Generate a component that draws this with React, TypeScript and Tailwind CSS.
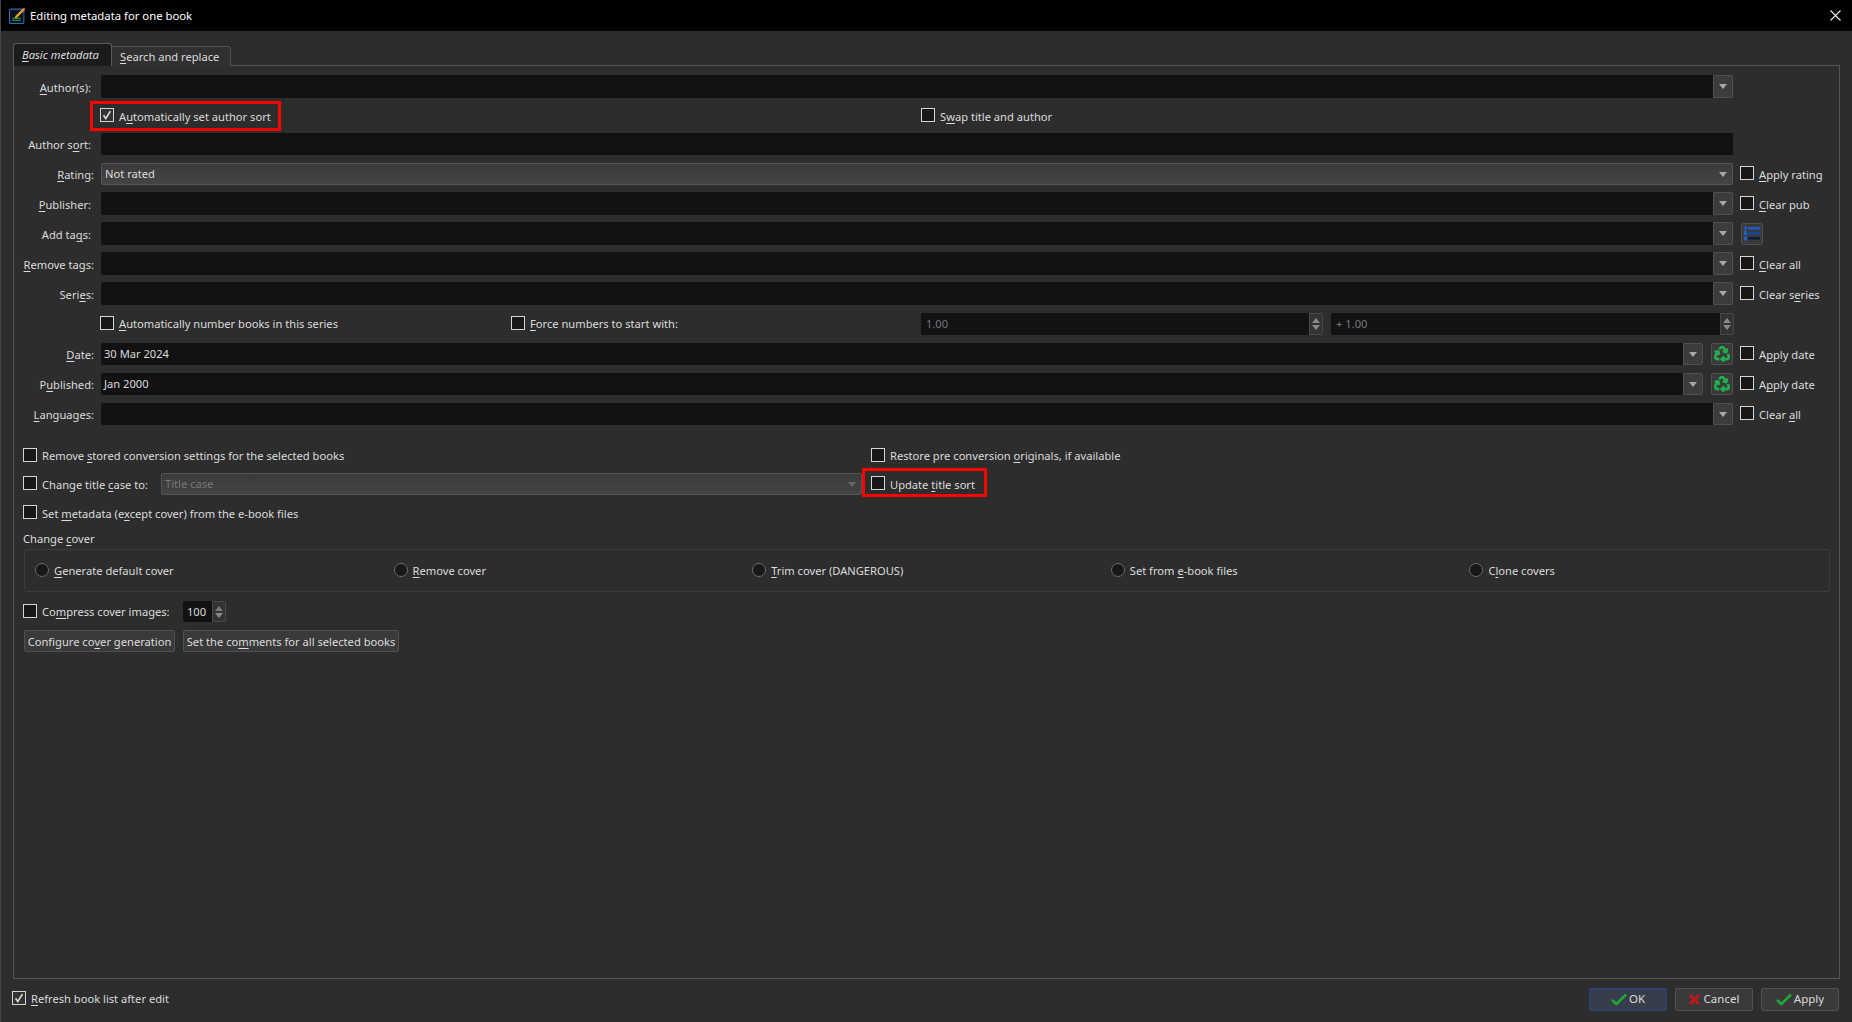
import React from "react";
import { FaRecycle } from "react-icons/fa";

const U = ({ children }: { children: React.ReactNode }) => <u className="underline-offset-2 decoration-1">{children}</u>;

const Tick = ({ size = 14 }: { size?: number }) => (
  <svg width={size} height={size} viewBox="0 0 14 14"><path d="M3 7.2 L5.6 11 L11 2.5" fill="none" stroke="#d8d8d8" strokeWidth="2" /></svg>
);

const Box = ({ on }: { on?: boolean }) => (
  <span className={`w-[14px] h-[14px] shrink-0 -translate-y-[1px] border border-[#d4d4d4] flex items-center justify-center ${on ? "bg-[#333333]" : "bg-[#181818]"}`}>
    {on && <Tick size={12} />}
  </span>
);

const Check = ({ on, flat, children, className = "" }: { on?: boolean; flat?: boolean; children: React.ReactNode; className?: string }) => (
  <span className={`flex items-center gap-[5px] whitespace-nowrap ${className}`}>
    <Box on={on} />
    <span className={flat ? "" : "translate-y-[1px]"}>{children}</span>
  </span>
);

const Arrow = ({ c = "#a8a8a8" }: { c?: string }) => (
  <svg width="8" height="5" viewBox="0 0 8 5"><path d="M0 0 H8 L4 5 Z" fill={c} /></svg>
);

const DropBtn = () => (
  <span className="w-[20px] h-full shrink-0 bg-[#3c3c3c] border border-[#505050] rounded-r-[2px] flex items-center justify-center"><Arrow /></span>
);

const Field = ({ text, drop = true }: { text?: string; drop?: boolean }) => (
  <span className="flex-1 h-full flex min-w-0">
    <span className="flex-1 h-full bg-[#121212] rounded-l-[2px] px-[3px] flex items-center text-[#dcdcdc]">{text}</span>
    {drop && <DropBtn />}
  </span>
);

const Label = ({ children, far }: { children: React.ReactNode; far?: boolean }) => (
  <span className={`w-[87px] shrink-0 text-right whitespace-nowrap pt-[2px] ${far ? "pr-[7px]" : "pr-[10px]"}`}>{children}</span>
);

const Combo = ({ text, dim, className = "" }: { text: string; dim?: boolean; className?: string }) => (
  <span className={`h-full flex items-center justify-between bg-gradient-to-b from-[#3a3a3a] to-[#444444] border border-[#555555] rounded-[2px] pl-[3px] pr-[5px] ${dim ? "text-[#777777]" : "text-[#dcdcdc]"} ${className}`}>
    <span>{text}</span>
    <Arrow c={dim ? "#666666" : "#a8a8a8"} />
  </span>
);

const Spin = ({ text, className = "" }: { text: string; className?: string }) => (
  <span className={`h-full flex ${className}`}>
    <span className="flex-1 bg-[#121212] rounded-l-[2px] flex items-center pl-[5px] text-[#777777]">{text}</span>
    <span className="w-[14px] bg-[#333333] border border-[#484848] rounded-r-[2px] flex flex-col items-center justify-center gap-[2px]">
      <svg width="8" height="5" viewBox="0 0 8 5"><path d="M0 5 H8 L4 0 Z" fill="#8a8a8a" /></svg>
      <Arrow c="#8a8a8a" />
    </span>
  </span>
);

const RecycleBtn = () => (
  <span className="w-[22px] h-full shrink-0 ml-[8px] bg-[#3a3a3a] border border-[#505050] rounded-[2px] flex items-center justify-center">
    <FaRecycle className="text-[#22b14c] text-[16px] stroke-[#22b14c] stroke-[28]" />
  </span>
);

const ListIcon = () => (
  <svg width="16" height="15" viewBox="0 0 16 15">
    <rect x="0.5" y="0" width="2" height="4" fill="#1f5fd0" />
    <rect x="0" y="5" width="3" height="4" fill="#1f5fd0" />
    <rect x="0" y="10.5" width="3" height="4" fill="#1f5fd0" />
    <rect x="4" y="1" width="12" height="2.5" fill="#1a5cc8" />
    <rect x="4" y="6" width="12" height="2.5" fill="#16479c" />
    <rect x="4" y="11" width="12" height="2.5" fill="#0f1c33" />
  </svg>
);

const TitleIcon = () => (
  <svg width="17" height="17" viewBox="0 0 16 16">
    <rect x="0.5" y="2" width="13.5" height="13.5" rx="1" fill="#0c1018" stroke="#2a6db8" />
    <path d="M3 10.5h8M3 12.5h8" stroke="#2f9e44" strokeWidth="1" />
    <path d="M6 8.5 L13.5 1 L15 2.5 L7.5 10 L5.5 10.5 Z" fill="#e8a030" />
    <path d="M13 1.5 L14.5 3 L15.6 1.9 L14.1 0.4 Z" fill="#d84a2a" />
  </svg>
);

const Row = ({ className, children }: { className: string; children: React.ReactNode }) => (
  <div className={`flex items-center ${className}`}>{children}</div>
);

const Side = ({ children }: { children: React.ReactNode }) => (
  <Check className="ml-[7px]">{children}</Check>
);

const Main = ({ children }: { children: React.ReactNode }) => (
  <span className="w-[1632px] shrink-0 h-full flex">{children}</span>
);

const Radio = ({ children }: { children: React.ReactNode }) => (
  <span className="flex items-center gap-[5px] whitespace-nowrap pt-[1px]">
    <span className="w-[14px] h-[14px] -ml-[1px] -translate-y-[1px] rounded-full bg-[#181818] border border-[#6a6a6a] shrink-0" />
    <span>{children}</span>
  </span>
);

const Btn = ({ children, className = "" }: { children: React.ReactNode; className?: string }) => (
  <span className={`h-full flex items-center justify-center bg-[#3a3a3a] border border-[#505050] rounded-[2px] whitespace-nowrap ${className}`}>{children}</span>
);

const Ok = () => (
  <svg width="16" height="13" viewBox="0 0 16 13"><path d="M1 7 L5.5 11 L15 1.5" fill="none" stroke="#22a838" strokeWidth="2.6" /></svg>
);

export default function App() {
  return (
    <div
      className="relative w-[1852px] h-[1022px] overflow-hidden flex flex-col bg-[#2d2d2d] text-[#dcdcdc] text-[11.15px] leading-none border-l border-[#444444]"
      style={{ fontFamily: '"Noto Sans", sans-serif' }}
    >
      <div className="h-[31px] shrink-0 bg-black flex items-center pl-[8px] pr-[11px] text-white text-[11.3px]">
        <TitleIcon />
        <span className="ml-[4px] flex-1">Editing metadata for one book</span>
        <svg width="11" height="11" viewBox="0 0 11 11"><path d="M0.5 0.5 L10.5 10.5 M10.5 0.5 L0.5 10.5" stroke="#f0f0f0" strokeWidth="1.1" /></svg>
      </div>

      <div className="flex-1 min-h-0 pl-[12px] pr-[12px] pt-[11px] flex flex-col">
        <div className="flex items-end h-[23px] shrink-0 relative top-[1px]">
          <span className="h-[23px] w-[99px] flex items-center pl-[8px] italic bg-[#1b1b1b] border border-b-0 border-[#5a5a5a] rounded-t-[3px]"><span><U>B</U>asic metadata</span></span>
          <span className="h-[20px] w-[119px] flex items-center pl-[8px] bg-[#303030] border border-l-0 border-b-0 border-[#4e4e4e] rounded-tr-[3px]"><span><U>S</U>earch and replace</span></span>
        </div>

        <div className="flex-1 min-h-0 border border-[#555555] pt-[9px]">
          <Row className="h-[23px]"><Label><U>A</U>uthor(s):</Label><Main><Field /></Main></Row>
          <Row className="mt-[6px] h-[23px] pt-[1px]">
            <span className="w-[86px] shrink-0" />
            <Check on className="w-[821px]"><>A<U>u</U>tomatically set author sort</></Check>
            <Check>S<U>w</U>ap title and author</Check>
          </Row>
          <Row className="mt-[6px] h-[22px]"><Label>Author s<U>o</U>rt:</Label><Main><Field drop={false} /></Main></Row>
          <Row className="mt-[8px] h-[22px]"><Label far><U>R</U>ating:</Label><Main><Combo text="Not rated" className="w-full" /></Main><Side><U>A</U>pply rating</Side></Row>
          <Row className="mt-[7px] h-[23px]"><Label><U>P</U>ublisher:</Label><Main><Field /></Main><Side><U>C</U>lear pub</Side></Row>
          <Row className="mt-[7px] h-[23px]">
            <Label>Add ta<U>g</U>s:</Label><Main><Field /></Main>
            <span className="ml-[8px] w-[22px] h-[22px] bg-[#3a3a3a] border border-[#505050] rounded-[3px] flex items-center justify-center"><ListIcon /></span>
          </Row>
          <Row className="mt-[7px] h-[23px]"><Label far><U>R</U>emove tags:</Label><Main><Field /></Main><Side><U>C</U>lear all</Side></Row>
          <Row className="mt-[7px] h-[23px]"><Label far>Seri<U>e</U>s:</Label><Main><Field /></Main><Side>Clear s<U>e</U>ries</Side></Row>
          <Row className="mt-[8px] h-[22px]">
            <span className="w-[86px] shrink-0" />
            <Check flat className="w-[411px]"><><U>A</U>utomatically number books in this series</></Check>
            <Check flat className="w-[410px]"><><U>F</U>orce numbers to start with:</></Check>
            <Spin text="1.00" className="w-[402px]" />
            <Spin text="+ 1.00" className="w-[403px] ml-[8px]" />
          </Row>
          <Row className="mt-[8px] h-[22px]"><Label far><U>D</U>ate:</Label><Main><Field text="30 Mar 2024" /><RecycleBtn /></Main><Side>A<U>p</U>ply date</Side></Row>
          <Row className="mt-[8px] h-[22px]"><Label far>P<U>u</U>blished:</Label><Main><Field text="Jan 2000" /><RecycleBtn /></Main><Side>A<U>p</U>ply date</Side></Row>
          <Row className="mt-[8px] h-[22px]"><Label far><U>L</U>anguages:</Label><Main><Field /></Main><Side>Clear <U>a</U>ll</Side></Row>

          <div className="pl-[9px] pr-[9px]">
            <Row className="mt-[20px] h-[22px]">
              <Check flat className="w-[848px]"><>Remove <U>s</U>tored conversion settings for the selected books</></Check>
              <Check flat>Restore pre conversion <U>o</U>riginals, if available</Check>
            </Row>
            <Row className="mt-[6px] h-[22px]">
              <Check className="w-[138px]"><>Change title <U>c</U>ase to:</></Check>
              <Combo text="Title case" dim className="w-[701px]" />
              <Check className="ml-[9px]">Update <U>t</U>itle sort</Check>
            </Row>
            <Row className="mt-[7px] h-[22px]">
              <Check>Set <U>m</U>etadata (e<U>x</U>cept cover) from the e-book files</Check>
            </Row>
            <div className="mt-[6px] h-[18px] flex items-center"><span>Change <U>c</U>over</span></div>
            <div className="mt-[1px] h-[43px] ml-[1px] border border-[#3c3c3c] rounded-[2px] pl-[11px] grid grid-cols-5 items-center">
              <Radio><U>G</U>enerate default cover</Radio>
              <Radio><U>R</U>emove cover</Radio>
              <Radio><U>T</U>rim cover (DANGEROUS)</Radio>
              <Radio>Set from <U>e</U>-book files</Radio>
              <Radio>C<U>l</U>one covers</Radio>
            </div>
            <Row className="mt-[9px] h-[21px]">
              <Check flat className="w-[160px]"><>Co<U>m</U>press cover images:</></Check>
              <span className="h-full w-[43px] flex">
                <span className="flex-1 bg-[#121212] rounded-l-[2px] flex items-center pl-[4px] text-[#dcdcdc]">100</span>
                <span className="w-[14px] bg-[#333333] border border-[#484848] rounded-r-[2px] flex flex-col items-center justify-center gap-[2px]">
                  <svg width="8" height="5" viewBox="0 0 8 5"><path d="M0 5 H8 L4 0 Z" fill="#777777" /></svg>
                  <Arrow c="#8a8a8a" />
                </span>
              </span>
            </Row>
            <Row className="mt-[8px] h-[22px] pl-[1px] gap-[8px]">
              <Btn className="w-[151px] pt-[1px]">Configure co<U>v</U>er generation</Btn>
              <Btn className="w-[216px] pt-[1px]">Set the co<U>m</U>ments for all selected books</Btn>
            </Row>
          </div>
        </div>

        <div className="h-[43px] shrink-0 flex items-center">
          <Check flat on className="flex-1 -ml-[1px] mb-[3px]"><><U>R</U>efresh book list after edit</></Check>
          <div className="flex h-[23px] gap-[8px] -ml-[1px] mr-[1px] mb-[3px]">
            <Btn className="w-[78px] gap-[2px] !bg-[#373d4a] !border-[#1c4a8c] text-[11.5px]"><Ok />OK</Btn>
            <Btn className="w-[78px] gap-[4px] text-[11.5px]">
              <svg width="11" height="11" viewBox="0 0 11 11"><path d="M1 1 L10 10 M10 1 L1 10" stroke="#c01818" strokeWidth="3" /></svg>
              Cancel
            </Btn>
            <Btn className="w-[78px] gap-[2px] text-[11.5px]"><Ok />Apply</Btn>
          </div>
        </div>
      </div>

      <div className="absolute left-[89px] top-[101px] w-[191px] h-[30px] border-[3px] border-[#ff0000]" />
      <div className="absolute left-[861px] top-[468px] w-[125px] h-[29px] border-[3px] border-[#ff0000]" />
    </div>
  );
}
